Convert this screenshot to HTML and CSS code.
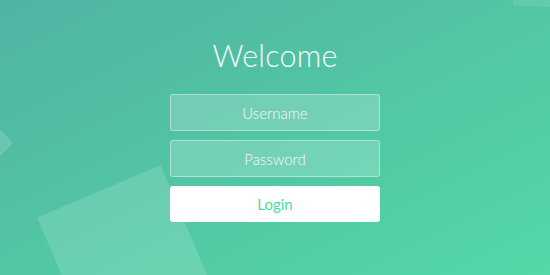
FILE: index.html
```html
<!DOCTYPE html>
<html lang="en">
<head>
  <meta charset="UTF-8">
  <title>Login</title>
  <link rel="stylesheet" href="styles.css">
</head>
<body>

  <div class="wrapper">
    <div class="container">
      <h1>Welcome</h1>
      <form class="form">
        <input type="text" placeholder="Username">
        <input type="password" placeholder="Password">
        <button type="submit" id="login-button">Login</button>
      </form>
    </div>

    <!-- floating squares in the background -->
    <ul class="bg-bubbles">
      <li class="big"></li>
      <li class="small"></li>
      <li class="corner"></li>
    </ul>
  </div>

</body>
</html>
```

FILE: styles.css
```css
* {
  box-sizing: border-box;
}

body {
  margin: 0;
  font-family: Lato, 'Open Sans', sans-serif;
}

.wrapper {
  position: relative;
  width: 100%;
  height: 275px;
  overflow: hidden;
  background: linear-gradient(to bottom right, #50b3a2 0%, #53d8a7 100%);
}

.container {
  position: relative;
  z-index: 2;
  display: flex;
  flex-direction: column;
  align-items: center;
  padding-top: 35px;
}

.container h1 {
  margin: 0;
  font-size: 30.5px;
  line-height: 40px;
  font-weight: 300;
  letter-spacing: 0.2px;
  color: #f2fbf7;
}

.form {
  display: flex;
  flex-direction: column;
  gap: 9px;
  width: 210px;
  margin-top: 19px;
}

.form input {
  width: 100%;
  height: 37px;
  padding: 0 10px;
  border: 1px solid rgba(255, 255, 255, 0.4);
  border-radius: 3px;
  background-color: rgba(255, 255, 255, 0.2);
  font-family: inherit;
  font-size: 15px;
  font-weight: 300;
  color: #fff;
  text-align: center;
  outline: none;
}

.form input::placeholder {
  color: #f4fbf8;
  opacity: 1;
}

.form button {
  height: 36px;
  border: none;
  border-radius: 3px;
  background-color: #fff;
  font-family: inherit;
  font-size: 15px;
  color: #4fdc9e;
  cursor: pointer;
}

.bg-bubbles {
  position: absolute;
  top: 0;
  left: 0;
  width: 100%;
  height: 100%;
  margin: 0;
  padding: 0;
  list-style: none;
  z-index: 1;
}

.bg-bubbles li {
  position: absolute;
  background-color: rgba(255, 255, 255, 0.15);
}

.bg-bubbles .big {
  width: 134px;
  height: 134px;
  left: 58px;
  top: 186px;
  transform: rotate(-23deg);
}

.bg-bubbles .small {
  width: 40px;
  height: 40px;
  left: -35px;
  top: 123px;
  transform: rotate(45deg);
}

.bg-bubbles .corner {
  width: 60px;
  height: 40px;
  left: 514px;
  top: -33px;
  transform: rotate(3deg);
  background-color: rgba(255, 255, 255, 0.1);
}
```
